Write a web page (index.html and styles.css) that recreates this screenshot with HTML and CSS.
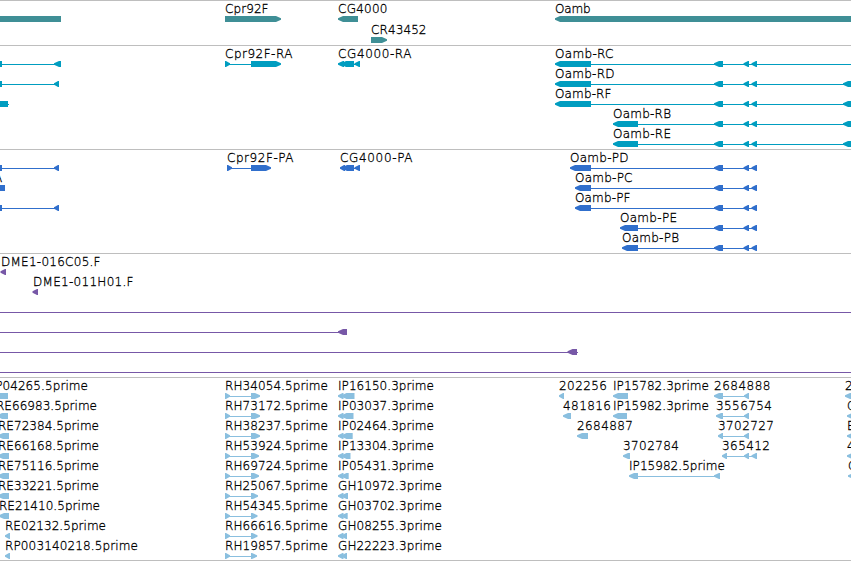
FILE: index.html
```html
<!DOCTYPE html>
<html lang="en">
<head>
<meta charset="utf-8">
<title>Genome tracks</title>
<link rel="stylesheet" href="styles.css">
</head>
<body>
<main class="browser">
  <section class="track track-gene" data-track="gene"></section>
  <section class="track track-transcript" data-track="transcript"></section>
  <section class="track track-protein" data-track="protein"></section>
  <section class="track track-clone" data-track="clone"></section>
  <section class="track track-est" data-track="est"></section>
</main>
<script src="tracks.js"></script>
</body>
</html>
```
FILE: styles.css
```css
body {
  margin: 0;
  background: #fff;
}

.browser {
  width: 851px;
  height: 561px;
  overflow: hidden;
  display: flex;
  flex-direction: column;
}

.track {
  box-sizing: border-box;
  flex: none;
  height: 104px;
  border-top: 1px solid #bebebe;
  display: flex;
  flex-direction: column;
}

.track-gene { height: 45px; color: #3f8f96; }
.track-transcript { color: #009dc0; }
.track-protein { color: #306fcc; }
.track-clone { height: 124px; color: #7758a7; }
.track-est { height: 184px; color: #8abfdf; border-bottom: 1px solid #bebebe; }

.row {
  display: block;
  flex: none;
  width: 851px;
  height: 20px;
  overflow: visible;
}

.track-gene .row { height: 21px; }

.row path,
.row rect { fill: currentColor; }

.label {
  font: 200 12px "DejaVu Sans", sans-serif;
  fill: #000;
  stroke: #000;
  stroke-width: 0.3px;
}
```
FILE: tracks.js
```js
// Feature: [label, label x, parts, label width].
// Parts: L/R = arrowed exon, B = block, - = intron line; each is "start,end".
const oambExons = 'L714,723 L743.5,749 L751.5,757';
const tracks = {
  gene: [
    [['', 0, 'B-5,61'], ['Cpr92F', 225, 'R225,281', 43.5], ['CG4000', 338, 'L338,358', 49.5], ['Oamb', 555, 'L555,860', 35.5]],
    [['CR43452', 371, 'R371,387', 55.5]]
  ],
  transcript: [
    [['', 0, '-0,56 B-5,2 L54,61'], ['Cpr92F-RA', 225, '-225,255 R225,230 R251,281', 67.5],
     ['CG4000-RA', 338, '-340,358 L338,344 L341,354 L354.5,360', 73.5],
     ['Oamb-RC', 555, '-580,860 L555,591 ' + oambExons, 58.5]],
    [['', 0, '-0,56 B-5,2 L54,59'], ['Oamb-RD', 555, '-580,860 L555,591 L843,860 ' + oambExons, 59.5]],
    [['', 0, '-0,9 B-5,8'], ['Oamb-RF', 555, '-580,860 L555,591 L843,860 ' + oambExons, 56.5]],
    [['Oamb-RB', 613, '-630,860 L613,638 L843,860 ' + oambExons, 58]],
    [['Oamb-RE', 613, '-630,860 L613,638 L843,860 ' + oambExons, 58]]
  ],
  protein: [
    [['', 0, '-0,56 B-5,2 L54,59'], ['Cpr92F-PA', 227, '-227,255 R227,232 R251,271', 66.5],
     ['CG4000-PA', 340, '-342,358 L340,345 L342,354 L354.5,360', 72.5],
     ['Oamb-PD', 570, '-580,755 L570,591 ' + oambExons, 58.5]],
    [['A', -6, 'B-5,5'], ['Oamb-PC', 575, '-580,755 L575,591 ' + oambExons, 57.5]],
    [['', 0, '-0,56 B-5,2 L54,59'], ['Oamb-PF', 575, '-580,755 L575,591 ' + oambExons, 55.5]],
    [['Oamb-PE', 620, '-630,755 L620,638 ' + oambExons, 57]],
    [['Oamb-PB', 622, '-630,755 L622,638 ' + oambExons, 57]]
  ],
  clone: [
    [['DME1-016C05.F', 1, 'L0.5,6', 99.5]],
    [['DME1-011H01.F', 33, 'L32.5,38', 100.5]],
    [['', 0, '-0,851']],
    [['', 0, '-0,345 L338,347']],
    [['', 0, '-0,578 L567.5,577']],
    [['', 0, '-0,851']]
  ],
  est: [
    [['IP04265.5prime', -8.5, 'B-5,8', 96.5], ['202256', 559, 'L559,564', 48], ['IP15782.3prime', 613, 'L613,628', 96],
     ['2684888', 714, '-720,747 L714,723 L744,749', 56.5], ['2', 845, 'L845,860']],
    [['RE66983.5prime', -4, 'L-3,8', 101], ['481816', 563, 'L563,571', 48], ['IP15982.3prime', 613, 'L613,627', 96],
     ['3556754', 716, '-720,747 L716,723 L744,749', 56], ['GH', 847, 'L847,860']],
    [['RE72384.5prime', -2, 'L-2,9', 101], ['2684887', 577, 'L577,588', 56],
     ['3702727', 718, '-720,747 L718,723 L744,749', 56], ['EK', 847, 'L847,860']],
    [['RE66168.5prime', -2, 'L-2,9', 101], ['3702784', 623, 'L623,630', 56],
     ['365412', 722, '-725,755 L722,727 L744,749 L751.5,757', 48], ['4', 847, 'L847,860']],
    [['RE75116.5prime', -2, 'L-2,9', 101], ['IP15982.5prime', 629, '-635,718 L629,638 L714,720', 96], ['GH', 848, 'L848,860']],
    [['RE33221.5prime', -2, 'L-2,9', 101]],
    [['RE21410.5prime', -1, 'L-1,9', 101]],
    [['RE02132.5prime', 5, 'L5,10', 101]],
    [['RP003140218.5prime', 5, 'L5,10', 133]]
  ]
};

// Paired clone reads: [5' name, 5' end, 3' name, 3' end]
[
  ['RH34054', 260, 'IP16150', 354.5], ['RH73172', 260, 'IP03037', 353.5],
  ['RH38237', 260, 'IP02464', 352.7], ['RH53924', 259, 'IP13304', 350.5],
  ['RH69724', 259, 'IP05431', 348.7], ['RH25067', 258, 'GH10972', 348],
  ['RH54345', 257.5, 'GH03702', 347.7], ['RH66616', 257.5, 'GH08255', 347],
  ['RH19857', 257, 'GH22223', 347]
].forEach(([five, fiveEnd, three, threeEnd], i) => {
  tracks.est[i].push(
    [five + '.5prime', 225, `-225,255 R225,230 R251,${fiveEnd}`, 103],
    [three + '.3prime', 338, `-340,345 L338,343.5 L341.5,${threeEnd}`, three[0] === 'I' ? 96 : 104]
  );
});

const barTop = 15;
const barBottom = barTop + 6;

function shape(part) {
  const [a, b] = part.slice(1).split(',').map(Number);
  const head = Math.min(5, b - a - 1);
  const arrow = (tip, neck, end) =>
    `<path d="M${tip} ${barTop + 2.2}L${neck} ${barTop}H${end}V${barBottom}H${neck}L${tip} ${barTop + 3.8}Z"/>`;
  switch (part[0]) {
    case '-': return `<rect x="${a}" y="${barTop + 3}" width="${b - a}" height="1"/>`;
    case 'B': return `<rect x="${a}" y="${barTop}" width="${b - a}" height="6"/>`;
    case 'L': return arrow(a, a + head, b);
    default: return arrow(b, b - head, a);
  }
}

document.querySelectorAll('[data-track]').forEach(track => {
  track.innerHTML = tracks[track.dataset.track].map(row =>
    '<svg class="row">' + row.map(([label, x, parts, width]) =>
      parts.split(' ').map(shape).join('') +
      (label ? `<text class="label" x="${x}" y="12"${width ? ` textLength="${width}"` : ''}>${label}</text>` : '')
    ).join('') + '</svg>'
  ).join('');
});
```
